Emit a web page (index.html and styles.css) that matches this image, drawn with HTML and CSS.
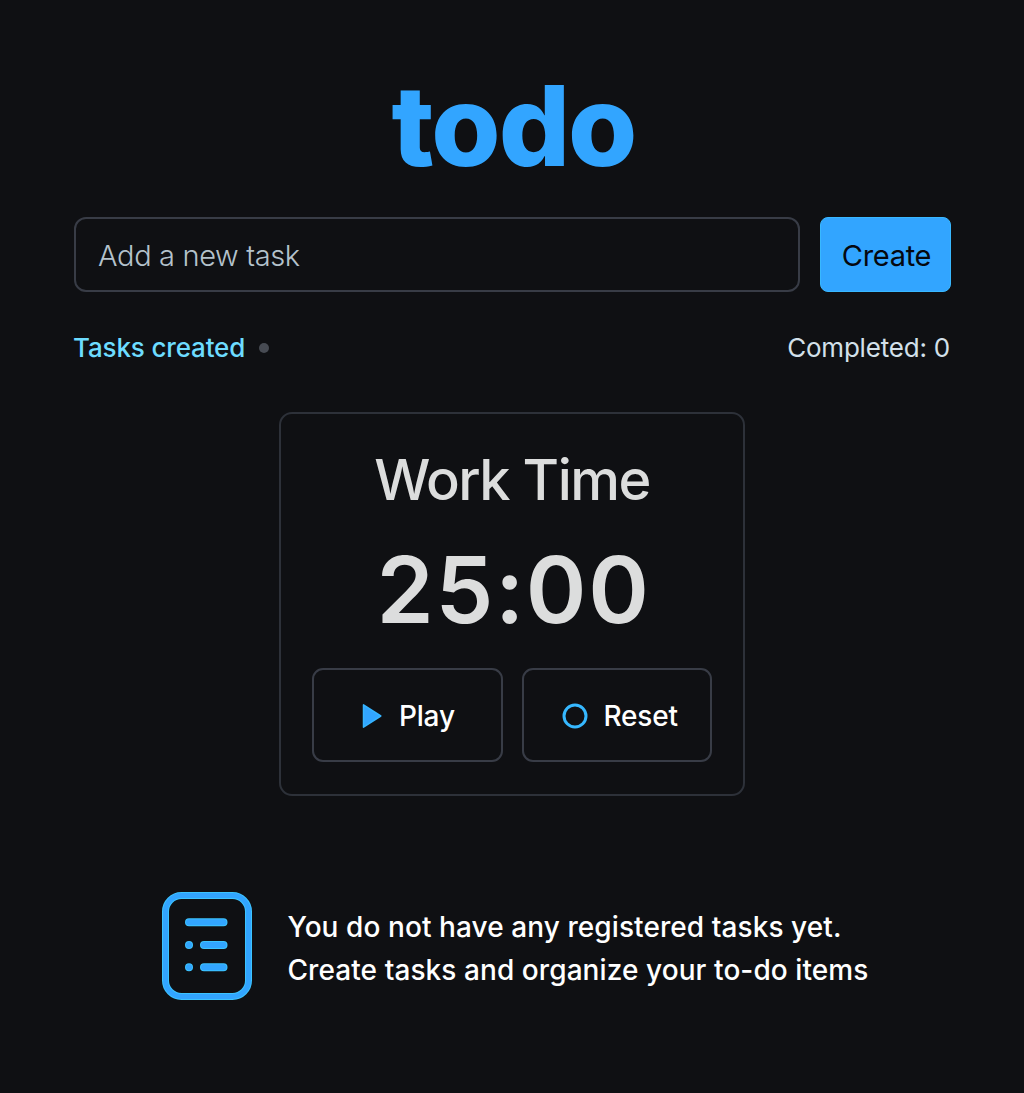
FILE: index.html
```html
<!DOCTYPE html>
<html lang="en">
<head>
<meta charset="utf-8">
<title>todo</title>
<link rel="stylesheet" href="styles.css">
</head>
<body>
<main class="page">
  <h1 class="logo">todo</h1>
  <form class="new-task">
    <div class="field">Add a new task</div>
    <button class="create" type="button">Create</button>
  </form>
  <div class="summary">
    <div class="created">Tasks created<i class="dot"></i></div>
    <div class="completed">Completed: 0</div>
  </div>
  <section class="timer">
    <h2 class="mode">Work Time</h2>
    <div class="clock">25:00</div>
    <div class="controls">
      <button class="control play" type="button">
        <svg width="20" height="26" viewBox="0 0 20 26"><path d="M1.5 1.8V24.2L18.8 13Z" fill="#32a5ff" stroke="#35b4ff" stroke-width="1.5" stroke-linejoin="round"/></svg>
        Play
      </button>
      <button class="control reset" type="button">
        <svg width="26" height="26" viewBox="0 0 26 26"><circle cx="13" cy="13" r="11" fill="none" stroke="#36b8ff" stroke-width="3"/></svg>
        Reset
      </button>
    </div>
  </section>
  <section class="empty">
    <svg width="90" height="108" viewBox="0 0 90 108">
      <g fill="none" stroke="#3cc4ff" stroke-linecap="round">
        <rect x="3.5" y="3.5" width="83" height="101" rx="16" stroke-width="7"/>
        <path d="M27 30.3H61.5M42 53H61.5M42 75.3H61.5M27 53H27.01M27 75.3H27.01" stroke-width="8"/>
      </g>
      <g fill="none" stroke="#32a5ff" stroke-linecap="round">
        <rect x="3.5" y="3.5" width="83" height="101" rx="16" stroke-width="5"/>
        <path d="M27 30.3H61.5M42 53H61.5M42 75.3H61.5M27 53H27.01M27 75.3H27.01" stroke-width="6"/>
      </g>
    </svg>
    <p class="message">You do not have any registered tasks yet.<br>Create tasks and organize your to-do items</p>
  </section>
</main>
</body>
</html>
```
FILE: styles.css
```css
* {
  box-sizing: border-box;
}

body {
  margin: 0;
  background: #0f1013;
  color: #fff;
  font-family: Inter, "Liberation Sans", sans-serif;
}

.page {
  display: flex;
  flex-direction: column;
  width: 877px;
  height: 1093px;
  margin-left: 74px;
  padding-top: 65px;
}

.logo {
  margin: 0;
  padding-left: 2px;
  color: #32a5ff;
  font-size: 112px;
  font-weight: 800;
  letter-spacing: -2px;
  line-height: 120px;
  text-align: center;
}

.new-task {
  display: flex;
  gap: 20px;
  height: 75px;
  margin-top: 32px;
}

.field {
  flex: 1;
  padding-left: 22px;
  border: 2px solid #383c46;
  border-radius: 12px;
  color: #b4c2cc;
  font-size: 29px;
  font-weight: 350;
  letter-spacing: -0.35px;
  line-height: 73px;
}

.create {
  width: 131px;
  padding: 2px 0 0 2px;
  border: 1px solid #39b8ff;
  border-radius: 8px;
  background: #32a5ff;
  color: #05080f;
  font: 400 29px Inter, "Liberation Sans", sans-serif;
  letter-spacing: -0.3px;
}

.summary {
  display: flex;
  justify-content: space-between;
  margin-top: 36px;
  font-size: 26px;
  line-height: 40px;
}

.created {
  display: flex;
  align-items: center;
  gap: 14px;
  margin-left: -1px;
  color: #6ddcff;
  font-weight: 450;
  letter-spacing: -0.15px;
}

.dot {
  width: 10px;
  height: 10px;
  border-radius: 50%;
  background: #474b53;
}

.completed {
  margin-right: 1px;
  color: #d3e0ea;
  letter-spacing: -0.2px;
}

.timer {
  width: 466px;
  height: 384px;
  margin: 44px 0 0 205px;
  padding: 31px 31px 0;
  border: 2px solid #2d3139;
  border-radius: 13px;
  color: #dcdddd;
}

.mode {
  margin: 0;
  font-size: 56px;
  font-weight: 500;
  letter-spacing: -1.5px;
  line-height: 70px;
  text-align: center;
}

.clock {
  margin-top: 25px;
  padding-left: 3px;
  font-size: 92px;
  font-weight: 600;
  letter-spacing: 1.6px;
  line-height: 100px;
  text-align: center;
}

.controls {
  display: grid;
  grid-template-columns: 1fr 1fr;
  gap: 19px;
  margin-top: 28px;
}

.control {
  display: flex;
  align-items: center;
  height: 94px;
  padding: 2px 0 0 48px;
  gap: 17px;
  border: 2px solid #383c46;
  border-radius: 11px;
  background: none;
  color: #fff;
  font: 500 28px Inter, "Liberation Sans", sans-serif;
  letter-spacing: -0.2px;
}

.reset {
  padding-left: 38px;
  gap: 16px;
}

.empty {
  display: flex;
  gap: 36px;
  margin: 96px 0 0 88px;
}

.message {
  margin: 14px 0 0 -0.5px;
  font-size: 28px;
  font-weight: 500;
  letter-spacing: 0.08px;
  line-height: 43px;
  white-space: nowrap;
}
```
